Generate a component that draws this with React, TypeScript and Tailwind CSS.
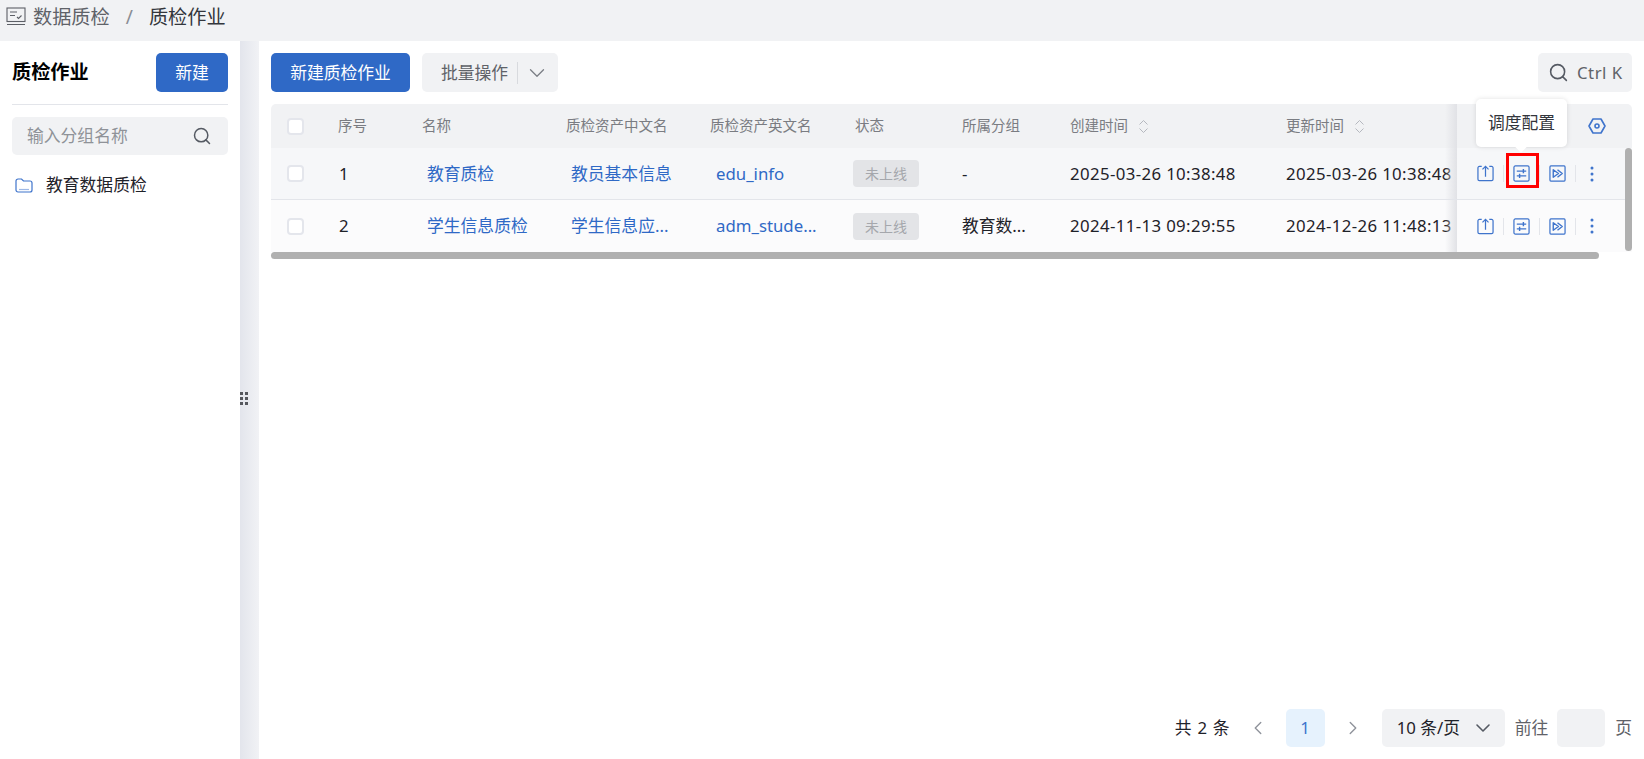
import React from 'react';
import { ChevronDown, ChevronLeft, ChevronRight, Search } from 'lucide-react';

const FONT = 'font-["Noto_Sans","Noto_Sans_CJK_SC",sans-serif]';

interface JobRow {
  no: number;
  name: string;
  cn: string;
  en: string;
  group: string;
  created: string;
  updated: string;
  bg: string;
}

const rows: JobRow[] = [
  { no: 1, name: '教育质检', cn: '教员基本信息', en: 'edu_info', group: '-', created: '2025-03-26 10:38:48', updated: '2025-03-26 10:38:48', bg: 'h-[51px] bg-[#f6f7f9]' },
  { no: 2, name: '学生信息质检', cn: '学生信息应...', en: 'adm_stude...', group: '教育数...', created: '2024-11-13 09:29:55', updated: '2024-12-26 11:48:13', bg: 'h-[53px] border-t border-[#e3e5ea] bg-[#fbfbfc]' },
];

const Checkbox = () => (
  <span className="block h-[17px] w-[17px] rounded-[4px] border-2 border-[#e4e6ec] bg-white" />
);

const UploadIcon = () => (
  <svg width="17" height="17" viewBox="0 0 18 18" fill="none" stroke="#3f74cc" strokeWidth="1.3">
    <path d="M5 1.5H2.5A1.5 1.5 0 0 0 1 3v12a1.5 1.5 0 0 0 1.5 1.5h13A1.5 1.5 0 0 0 17 15V3a1.5 1.5 0 0 0-1.5-1.5H13" />
    <path d="M9 12.5V1.5M5.8 4.6 9 1.4l3.2 3.2" />
  </svg>
);

const SlidersIcon = () => (
  <svg width="17" height="17" viewBox="0 0 18 18" fill="none" stroke="#3f74cc" strokeWidth="1.3">
    <rect x="1" y="1" width="16" height="16" rx="1.5" />
    <path d="M4 6.5h10M4 11.5h10" strokeWidth="1.1" />
    <path d="M11 4.3v4.400M7 9.300v4.400" strokeWidth="1.5" />
  </svg>
);

const PlayIcon = () => (
  <svg width="17" height="17" viewBox="0 0 18 18" fill="none" stroke="#3f74cc" strokeWidth="1.3">
    <rect x="1" y="1" width="16" height="16" rx="1" />
    <path d="M4.5 5v8L10 9zM9 5l5 4-5 4" strokeWidth="1.5" strokeLinejoin="round" />
  </svg>
);

const DotsIcon = () => (
  <svg width="6" height="16" viewBox="0 0 6 16" fill="#3f74cc">
    <circle cx="3" cy="2" r="1.5" />
    <circle cx="3" cy="8" r="1.5" />
    <circle cx="3" cy="14" r="1.5" />
  </svg>
);

const HexIcon = () => (
  <svg width="18" height="16" viewBox="0 0 18 16" fill="none" stroke="#3f74cc" strokeWidth="1.6">
    <path d="M5 1h8l4 7-4 7H5L1 8z" strokeLinejoin="round" />
    <circle cx="9" cy="8" r="2" />
  </svg>
);

const FolderIcon = () => (
  <svg width="18" height="15" viewBox="0 0 18 15" fill="none" stroke="#3f74cc" strokeWidth="1.2">
    <path d="M1 3a2 2 0 0 1 2-2h3.5l2 2H15a2 2 0 0 1 2 2v7a2 2 0 0 1-2 2H3a2 2 0 0 1-2-2z" />
    <path d="M4 11.5h10" stroke="#9db8e6" />
  </svg>
);

const MonitorIcon = () => (
  <svg width="20" height="20" viewBox="0 0 20 20" fill="none" stroke="#5c5f66" strokeWidth="1.1">
    <rect x="1" y="1" width="18" height="13.5" />
    <path d="M4 5h7M4 8.5h5M11 10l1.5 1.5L15.5 8.5M1 17.5h18" />
  </svg>
);

const SortIcon = () => (
  <svg width="11" height="15" viewBox="0 0 11 15" fill="none" stroke="#b5b8bf" strokeWidth="1">
    <path d="M1.5 5.5l4-4 4 4M1.5 9.500l4 4 4-4" />
  </svg>
);

const Divider = () => <span className="mx-[9px] block h-[17px] w-px bg-[#e3e5ea]" />;

const Actions = ({ marked }: { marked?: boolean }) => (
  <div className="flex w-[175px] items-center pl-[20px]">
    <UploadIcon />
    <Divider />
    <span className="relative block h-[17px]">
      <SlidersIcon />
      {marked && (
        <span className="absolute left-[-7px] top-[-12px] h-[35px] w-[33px] border-[3px] border-[#ff0000]" />
      )}
    </span>
    <Divider />
    <PlayIcon />
    <Divider />
    <span className="ml-[4px]"><DotsIcon /></span>
  </div>
);

export default function App() {
  return (
    <div className={`${FONT} flex h-screen flex-col overflow-hidden bg-white text-[16.8px] text-[#1f2229]`}>
      <div className="flex h-[41px] shrink-0 items-center bg-[#f1f2f4] pb-[7px] pl-[6px] text-[19.2px]">
        <MonitorIcon />
        <span className="ml-[7px] text-[#5f6268]">数据质检</span>
        <span className="mx-[16px] text-[#8b8e94]">/</span>
        <span className="text-[#33363c]">质检作业</span>
      </div>

      <div className="flex min-h-0 flex-1">
        <aside className="w-[240px] shrink-0 px-[12px]">
          <div className="box-border flex h-[64px] items-center justify-between border-b border-[#e3e5ea] py-[12px]">
            <span className="text-[19.2px] font-bold text-black">质检作业</span>
            <button className="h-[39px] w-[72px] rounded-[5px] bg-[#2f69c6] text-white">新建</button>
          </div>
          <div className="mt-[12px] flex h-[38px] items-center justify-between rounded-[5px] bg-[#f1f2f4] pl-[15px] pr-[16px]">
            <span className="text-[#8f9298]">输入分组名称</span>
            <Search size={20} color="#555a63" strokeWidth={1.8} />
          </div>
          <div className="mt-[14px] flex h-[32px] items-center pl-[3px]">
            <FolderIcon />
            <span className="ml-[13px]">教育数据质检</span>
          </div>
        </aside>

        <div className="relative w-[19px] shrink-0 bg-gradient-to-r from-[#e3e5ec] to-[#f1f2f5]">
          <div className="absolute left-0 top-[351px] grid grid-cols-2 gap-[2px]">
            {[0, 1, 2, 3, 4, 5].map(i => (
              <span key={i} className="h-[3px] w-[3px] bg-[#55575d]" />
            ))}
          </div>
        </div>

        <main className="flex min-w-0 flex-1 flex-col px-[12px] pb-[12px]">
          <div className="mt-[12px] flex h-[39px] items-center">
            <button className="h-[39px] w-[139px] rounded-[5px] bg-[#2f69c6] text-white">新建质检作业</button>
            <div className="ml-[12px] flex h-[39px] w-[136px] items-center rounded-[5px] bg-[#f1f2f4] pl-[19px] text-[#5f6268]">
              <span>批量操作</span>
              <span className="ml-[9px] h-[22px] w-px bg-[#d8dade]" />
              <ChevronDown size={26} color="#7b7e85" strokeWidth={1.2} className="ml-[6px]" />
            </div>
            <div className="ml-auto flex h-[39px] w-[94px] items-center rounded-[5px] bg-[#f1f2f4] pl-[10px] text-[#5f6268]">
              <Search size={21} color="#555a63" strokeWidth={1.8} />
              <span className="ml-[8px] whitespace-nowrap tracking-[0.5px]">Ctrl K</span>
            </div>
          </div>

          <div className="relative mt-[12px]">
            <div className="flex h-[44px] items-center rounded-t-[5px] bg-[#f1f2f4] text-[14.5px] text-[#7a7c82]">
              <div className="w-[67px] pl-[16px]"><Checkbox /></div>
              <div className="w-[84px]">序号</div>
              <div className="w-[144px]">名称</div>
              <div className="w-[144px]">质检资产中文名</div>
              <div className="w-[145px]">质检资产英文名</div>
              <div className="w-[107px]">状态</div>
              <div className="w-[108px]">所属分组</div>
              <div className="flex w-[216px] items-center gap-[10px]">创建时间 <SortIcon /></div>
              <div className="flex w-[171px] items-center gap-[10px]">更新时间 <SortIcon /></div>
              <div className="relative flex h-full w-[175px] items-center justify-end pr-[26px]">
                <span className="absolute inset-y-0 left-[-12px] w-[12px] bg-gradient-to-r from-transparent to-[#e1e2e6]" />
                <HexIcon />
              </div>
            </div>

            {rows.map((row, i) => (
              <div key={row.no} className={`flex items-center whitespace-nowrap ${row.bg}`}>
                <div className="w-[67px] pl-[16px]"><Checkbox /></div>
                <div className="w-[84px] pl-[1px]">{row.no}</div>
                <div className="w-[144px] pl-[5px] text-[#2f69c6]">{row.name}</div>
                <div className="w-[144px] pl-[5px] text-[#2f69c6]">{row.cn}</div>
                <div className="w-[145px] pl-[6px] text-[#2f69c6]">{row.en}</div>
                <div className="w-[107px]">
                  <span className="ml-[-2px] flex h-[27px] w-[66px] items-center justify-center rounded-[4px] bg-[#e3e4e7] text-[14px] text-[#a5a7ac]">未上线</span>
                </div>
                <div className="w-[108px]">{row.group}</div>
                <div className="w-[216px] tracking-[0.38px]">{row.created}</div>
                <div className="w-[171px] tracking-[0.38px]">{row.updated}</div>
                <div className="relative flex h-full w-[175px] items-center">
                  <span className="absolute inset-y-0 left-[-12px] w-[12px] bg-gradient-to-r from-transparent to-[#e1e2e6]" />
                  <Actions marked={i === 0} />
                </div>
              </div>
            ))}

            <div className="h-[7px] w-[1328px] rounded-full bg-[#b0b0b0]" />

            <div className="absolute right-0 top-[44px] h-[103px] w-[7px] rounded-full bg-[#b0b0b0]" />

            <div className="absolute left-[1205px] top-[-5px] flex h-[48px] w-[91px] items-center justify-center rounded-[5px] bg-white text-[#33363c] shadow-[0_0_5px_rgba(0,0,0,0.12)]">
              调度配置
              <span className="absolute bottom-[-4px] left-[41px] h-[8px] w-[8px] rotate-45 bg-white" />
            </div>
          </div>

          <div className="mt-auto flex h-[38px] items-center justify-end">
            <span className="[word-spacing:1.5px]">共 2 条</span>
            <ChevronLeft size={22} color="#8f939b" strokeWidth={1.5} className="ml-[17px]" />
            <span className="ml-[17px] flex h-[38px] w-[39px] items-center justify-center rounded-[5px] bg-[#e6f2fd] text-[#3f74cc]">1</span>
            <ChevronRight size={22} color="#8f939b" strokeWidth={1.5} className="ml-[17px]" />
            <div className="ml-[18px] flex h-[38px] w-[123px] items-center justify-between rounded-[5px] bg-[#f1f2f4] pl-[15px] pr-[10px]">
              <span>10 条/页</span>
              <ChevronDown size={24} color="#555a63" strokeWidth={1.6} />
            </div>
            <span className="ml-[10px] text-[#5f6268]">前往</span>
            <span className="ml-[9px] h-[38px] w-[48px] rounded-[5px] bg-[#f1f2f4]" />
            <span className="ml-[10px] text-[#5f6268]">页</span>
          </div>
        </main>
      </div>
    </div>
  );
}
